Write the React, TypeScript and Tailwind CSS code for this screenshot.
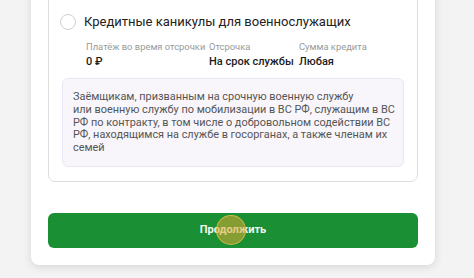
import React from "react";

export default function App() {
  const font = { fontFamily: 'Roboto, "Liberation Sans", sans-serif' };
  return (
    <div className="w-[474px] h-[278px] bg-[#f3f3f3] overflow-hidden" style={font}>
      <div className="ml-[31px] w-[404px] -mt-[20px] bg-white rounded-b-[8px] shadow-[0_2px_8px_rgba(0,0,0,0.12)] px-[17px] pt-[10px] pb-[17px]">
        <div className="border border-[#dedede] rounded-[7px] pl-[11px] pr-[13px] pt-[23px] pb-[14px]">
          <div className="flex items-center gap-[8px] h-[16px]">
            <div className="w-[16px] h-[16px] rounded-full border border-[#cfcfcf]" />
            <div className="text-[13px] leading-[16px] text-[#222] whitespace-nowrap">Кредитные каникулы для военнослужащих</div>
          </div>
          <div className="flex pl-[26px] mt-[10px] whitespace-nowrap">
            <div className="w-[123px]">
              <div className="text-[9.4px] leading-[13px] text-[#9a9a9a]">Платёж во время отсрочки</div>
              <div className="text-[11px] leading-[16px] font-medium text-[#1c1c1c] mt-[1px]">0 ₽</div>
            </div>
            <div className="w-[90px]">
              <div className="text-[9.4px] leading-[13px] text-[#9a9a9a]">Отсрочка</div>
              <div className="text-[11px] leading-[16px] font-medium text-[#1c1c1c] mt-[1px]">На срок службы</div>
            </div>
            <div>
              <div className="text-[9.4px] leading-[13px] text-[#9a9a9a]">Сумма кредита</div>
              <div className="text-[11px] leading-[16px] font-medium text-[#1c1c1c] mt-[1px]">Любая</div>
            </div>
          </div>
          <div className="mt-[8px] ml-[2px] rounded-[6px] border border-[#ece6f2] bg-[#f8f5fb] pl-[10px] pr-[8px] pt-[12px] pb-[11px] text-[10.9px] leading-[12.8px] text-[#555] whitespace-nowrap">
            <div>Заёмщикам, призванным на срочную военную службу</div>
            <div>или военную службу по мобилизации в ВС РФ, служащим в ВС</div>
            <div>РФ по контракту, в том числе о добровольном содействии ВС</div>
            <div>РФ, находящимся на службе в госорганах, а также членам их</div>
            <div>семей</div>
          </div>
        </div>
        <div className="relative mt-[31px] h-[35px] rounded-[6px] bg-[#1b8f33] flex items-center justify-center">
          <span className="text-[11px] font-bold text-[#f2f7f0]">Продолжить</span>
          <div className="absolute left-[168px] top-[2px] w-[30px] h-[30px] rounded-full bg-[rgba(220,170,50,0.55)] border border-[rgba(240,200,80,0.7)]" />
        </div>
      </div>
    </div>
  );
}
